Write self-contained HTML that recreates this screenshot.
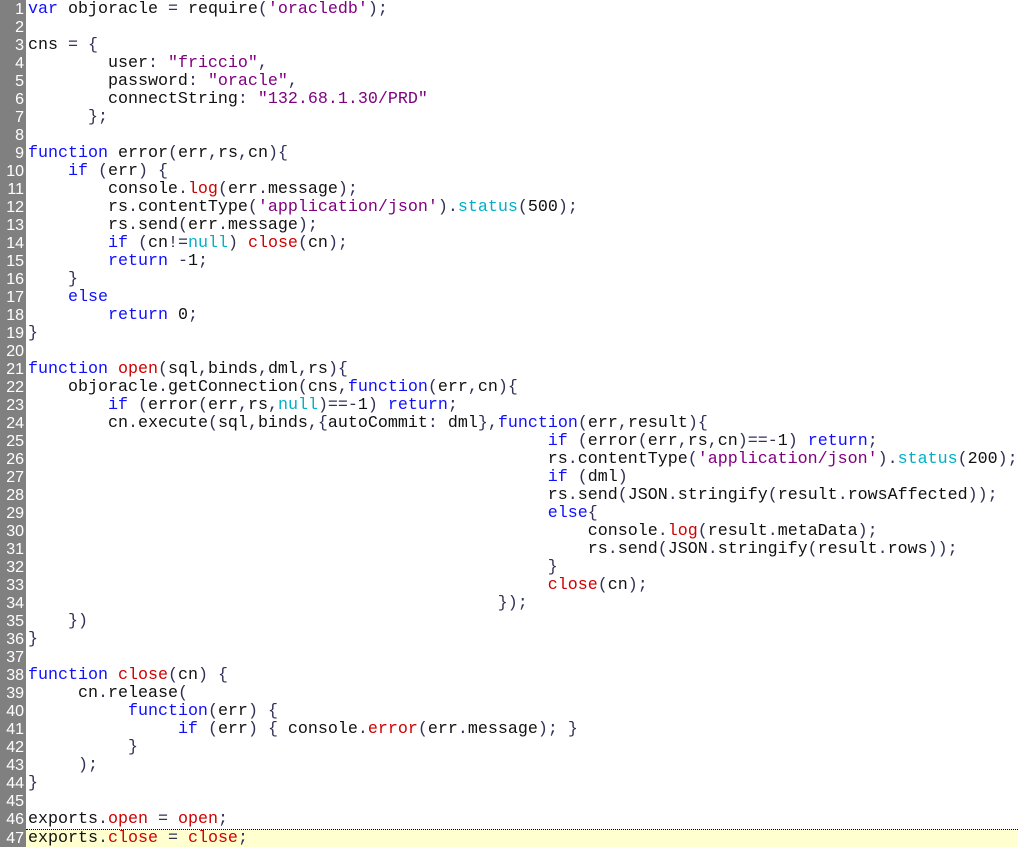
<!DOCTYPE html>
<html><head><meta charset="utf-8"><style>
html,body{margin:0;padding:0;background:#fff;width:1018px;height:847px;overflow:hidden}
.w{position:relative;padding-top:1px}
.g{position:absolute;left:0;top:0;width:26px;height:847px;background:#808080}
.l{position:relative;height:18px;line-height:18px;white-space:pre;font-family:"Liberation Mono",monospace;font-size:16.67px;color:#111}
.n{position:absolute;left:0;width:24px;text-align:right;color:#fff;font-family:"Liberation Sans",sans-serif;font-size:16px}
.c{position:absolute;left:28px}
.hl{background:#ffffd0;border-top:1px dotted #000;box-sizing:border-box}
.k{color:#1010ff}.s{color:#800080}.o{color:#303058}.r{color:#d00000}.y{color:#00b0c8}
</style></head><body><div class="g"></div><div class="w">
<div class="l"><span class="n">1</span><span class="c"><span class="k">var</span> objoracle <span class="o">=</span> require<span class="o">(</span><span class="s">'oracledb'</span><span class="o">);</span></span></div>
<div class="l"><span class="n">2</span></div>
<div class="l"><span class="n">3</span><span class="c">cns <span class="o">=</span> <span class="o">{</span></span></div>
<div class="l"><span class="n">4</span><span class="c">        user<span class="o">:</span> <span class="s">"friccio"</span><span class="o">,</span></span></div>
<div class="l"><span class="n">5</span><span class="c">        password<span class="o">:</span> <span class="s">"oracle"</span><span class="o">,</span></span></div>
<div class="l"><span class="n">6</span><span class="c">        connectString<span class="o">:</span> <span class="s">"132.68.1.30/PRD"</span></span></div>
<div class="l"><span class="n">7</span><span class="c">      <span class="o">};</span></span></div>
<div class="l"><span class="n">8</span></div>
<div class="l"><span class="n">9</span><span class="c"><span class="k">function</span> error<span class="o">(</span>err<span class="o">,</span>rs<span class="o">,</span>cn<span class="o">){</span></span></div>
<div class="l"><span class="n">10</span><span class="c">    <span class="k">if</span> <span class="o">(</span>err<span class="o">)</span> <span class="o">{</span></span></div>
<div class="l"><span class="n">11</span><span class="c">        console<span class="o">.</span><span class="r">log</span><span class="o">(</span>err<span class="o">.</span>message<span class="o">);</span></span></div>
<div class="l"><span class="n">12</span><span class="c">        rs<span class="o">.</span>contentType<span class="o">(</span><span class="s">'application/json'</span><span class="o">).</span><span class="y">status</span><span class="o">(</span>500<span class="o">);</span></span></div>
<div class="l"><span class="n">13</span><span class="c">        rs<span class="o">.</span>send<span class="o">(</span>err<span class="o">.</span>message<span class="o">);</span></span></div>
<div class="l"><span class="n">14</span><span class="c">        <span class="k">if</span> <span class="o">(</span>cn<span class="o">!=</span><span class="y">null</span><span class="o">)</span> <span class="r">close</span><span class="o">(</span>cn<span class="o">);</span></span></div>
<div class="l"><span class="n">15</span><span class="c">        <span class="k">return</span> <span class="o">-</span>1<span class="o">;</span></span></div>
<div class="l"><span class="n">16</span><span class="c">    <span class="o">}</span></span></div>
<div class="l"><span class="n">17</span><span class="c">    <span class="k">else</span></span></div>
<div class="l"><span class="n">18</span><span class="c">        <span class="k">return</span> 0<span class="o">;</span></span></div>
<div class="l"><span class="n">19</span><span class="c"><span class="o">}</span></span></div>
<div class="l"><span class="n">20</span></div>
<div class="l"><span class="n">21</span><span class="c"><span class="k">function</span> <span class="r">open</span><span class="o">(</span>sql<span class="o">,</span>binds<span class="o">,</span>dml<span class="o">,</span>rs<span class="o">){</span></span></div>
<div class="l"><span class="n">22</span><span class="c">    objoracle<span class="o">.</span>getConnection<span class="o">(</span>cns<span class="o">,</span><span class="k">function</span><span class="o">(</span>err<span class="o">,</span>cn<span class="o">){</span></span></div>
<div class="l"><span class="n">23</span><span class="c">        <span class="k">if</span> <span class="o">(</span>error<span class="o">(</span>err<span class="o">,</span>rs<span class="o">,</span><span class="y">null</span><span class="o">)==-</span>1<span class="o">)</span> <span class="k">return</span><span class="o">;</span></span></div>
<div class="l"><span class="n">24</span><span class="c">        cn<span class="o">.</span>execute<span class="o">(</span>sql<span class="o">,</span>binds<span class="o">,{</span>autoCommit<span class="o">:</span> dml<span class="o">},</span><span class="k">function</span><span class="o">(</span>err<span class="o">,</span>result<span class="o">){</span></span></div>
<div class="l"><span class="n">25</span><span class="c">                                                    <span class="k">if</span> <span class="o">(</span>error<span class="o">(</span>err<span class="o">,</span>rs<span class="o">,</span>cn<span class="o">)==-</span>1<span class="o">)</span> <span class="k">return</span><span class="o">;</span></span></div>
<div class="l"><span class="n">26</span><span class="c">                                                    rs<span class="o">.</span>contentType<span class="o">(</span><span class="s">'application/json'</span><span class="o">).</span><span class="y">status</span><span class="o">(</span>200<span class="o">);</span></span></div>
<div class="l"><span class="n">27</span><span class="c">                                                    <span class="k">if</span> <span class="o">(</span>dml<span class="o">)</span></span></div>
<div class="l"><span class="n">28</span><span class="c">                                                    rs<span class="o">.</span>send<span class="o">(</span>JSON<span class="o">.</span>stringify<span class="o">(</span>result<span class="o">.</span>rowsAffected<span class="o">));</span></span></div>
<div class="l"><span class="n">29</span><span class="c">                                                    <span class="k">else</span><span class="o">{</span></span></div>
<div class="l"><span class="n">30</span><span class="c">                                                        console<span class="o">.</span><span class="r">log</span><span class="o">(</span>result<span class="o">.</span>metaData<span class="o">);</span></span></div>
<div class="l"><span class="n">31</span><span class="c">                                                        rs<span class="o">.</span>send<span class="o">(</span>JSON<span class="o">.</span>stringify<span class="o">(</span>result<span class="o">.</span>rows<span class="o">));</span></span></div>
<div class="l"><span class="n">32</span><span class="c">                                                    <span class="o">}</span></span></div>
<div class="l"><span class="n">33</span><span class="c">                                                    <span class="r">close</span><span class="o">(</span>cn<span class="o">);</span></span></div>
<div class="l"><span class="n">34</span><span class="c">                                               <span class="o">});</span></span></div>
<div class="l"><span class="n">35</span><span class="c">    <span class="o">})</span></span></div>
<div class="l"><span class="n">36</span><span class="c"><span class="o">}</span></span></div>
<div class="l"><span class="n">37</span></div>
<div class="l"><span class="n">38</span><span class="c"><span class="k">function</span> <span class="r">close</span><span class="o">(</span>cn<span class="o">)</span> <span class="o">{</span></span></div>
<div class="l"><span class="n">39</span><span class="c">     cn<span class="o">.</span>release<span class="o">(</span></span></div>
<div class="l"><span class="n">40</span><span class="c">          <span class="k">function</span><span class="o">(</span>err<span class="o">)</span> <span class="o">{</span></span></div>
<div class="l"><span class="n">41</span><span class="c">               <span class="k">if</span> <span class="o">(</span>err<span class="o">)</span> <span class="o">{</span> console<span class="o">.</span><span class="r">error</span><span class="o">(</span>err<span class="o">.</span>message<span class="o">);</span> <span class="o">}</span></span></div>
<div class="l"><span class="n">42</span><span class="c">          <span class="o">}</span></span></div>
<div class="l"><span class="n">43</span><span class="c">     <span class="o">);</span></span></div>
<div class="l"><span class="n">44</span><span class="c"><span class="o">}</span></span></div>
<div class="l"><span class="n">45</span></div>
<div class="l"><span class="n">46</span><span class="c">exports<span class="o">.</span><span class="r">open</span> <span class="o">=</span> <span class="r">open</span><span class="o">;</span></span></div>
<div class="l hl" style="margin-left:26px"><span class="n" style="left:-26px">47</span><span class="c" style="left:2px">exports<span class="o">.</span><span class="r">close</span> <span class="o">=</span> <span class="r">close</span><span class="o">;</span></span></div>
</div></body></html>
